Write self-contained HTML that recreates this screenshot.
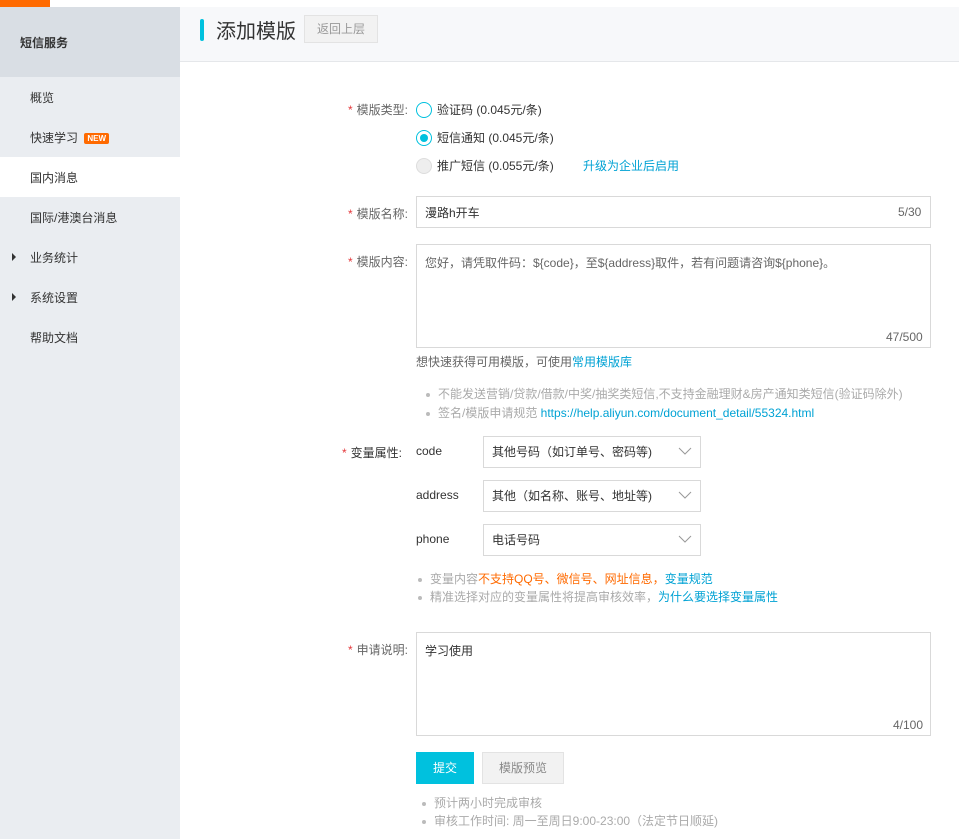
<!DOCTYPE html>
<html><head><meta charset="utf-8"><style>
*{margin:0;padding:0;box-sizing:border-box}
body{width:959px;height:839px;position:relative;overflow:hidden;background:#fff;font-family:"Liberation Sans","Noto Sans CJK SC",sans-serif;font-size:12px;color:#333}
.a{position:absolute;white-space:nowrap}
.side{position:absolute;left:0;top:7px;width:180px;height:832px;background:#eaedf1}
.lab{position:absolute;text-align:right;width:120px;color:#666}
.lab b{color:#e4393c;font-weight:normal;margin-right:4px}
.box{position:absolute;border:1px solid #d9d9d9;background:#fff}
.sel{position:absolute;left:483px;width:218px;height:32px;border:1px solid #d9d9d9;padding:0 8px;line-height:30px;color:#333}
.sel svg{position:absolute;right:8px;top:10px}
.grey{color:#999}
.blue{color:#00a2d4}
.dot{display:inline-block;width:4px;height:4px;background:#bbb;border-radius:50%;margin-right:8px;vertical-align:middle}
.radio{position:absolute;width:16px;height:16px;border-radius:50%;border:1px solid #00c1de;background:#fff}
</style></head><body>
<div class="a" style="left:0;top:0;width:959px;height:7px;background:#fff;box-shadow:0 1px 3px rgba(0,0,0,.08)"></div>
<div class="a" style="left:0;top:0;width:50px;height:7px;background:#ff6a00"></div>
<div class="side"></div>
<div class="a" style="left:0;top:7px;width:180px;height:70px;background:#d9dee4"></div>
<div class="a" style="left:20px;top:34px;font-weight:bold;color:#333">短信服务</div>
<div class="a" style="left:30px;top:89px">概览</div>
<div class="a" style="left:30px;top:129px">快速学习 <span style="display:inline-block;background:#ff6a00;color:#fff;font-size:8px;font-weight:bold;padding:1px 3px;border-radius:2px;margin-left:3px;vertical-align:1px">NEW</span></div>
<div class="a" style="left:0;top:157px;width:180px;height:40px;background:#fff"></div>
<div class="a" style="left:30px;top:169px">国内消息</div>
<div class="a" style="left:30px;top:209px">国际/港澳台消息</div>
<div class="a" style="left:12px;top:253px;width:0;height:0;border-left:4px solid #333;border-top:4px solid transparent;border-bottom:4px solid transparent"></div>
<div class="a" style="left:30px;top:249px">业务统计</div>
<div class="a" style="left:12px;top:293px;width:0;height:0;border-left:4px solid #333;border-top:4px solid transparent;border-bottom:4px solid transparent"></div>
<div class="a" style="left:30px;top:289px">系统设置</div>
<div class="a" style="left:30px;top:329px">帮助文档</div>

<div class="a" style="left:180px;top:7px;width:779px;height:55px;background:#f7f8fa;border-bottom:1px solid #e5e7ea"></div>
<div class="a" style="left:200px;top:19px;width:4px;height:22px;background:#00c1de;border-radius:2px"></div>
<div class="a" style="left:216px;top:15px;font-size:20px;color:#333">添加模版</div>
<div class="a" style="left:304px;top:15px;width:74px;height:28px;border:1px solid #e3e3e3;background:#f2f2f2;color:#999;text-align:center;line-height:26px">返回上层</div>

<div class="lab" style="left:288px;top:101px"><b>*</b>模版类型:</div>
<div class="radio" style="left:416px;top:102px"></div>
<div class="a" style="left:437px;top:101px;color:#333">验证码 (0.045元/条)</div>
<div class="radio" style="left:416px;top:130px"><div style="position:absolute;left:3px;top:3px;width:8px;height:8px;border-radius:50%;background:#00c1de"></div></div>
<div class="a" style="left:437px;top:129px">短信通知 (0.045元/条)</div>
<div class="radio" style="left:416px;top:158px;border-color:#ddd;background:#eee"></div>
<div class="a" style="left:437px;top:157px">推广短信 (0.055元/条)</div>
<div class="a blue" style="left:583px;top:157px;color:#00a2d4">升级为企业后启用</div>

<div class="lab" style="left:288px;top:205px"><b>*</b>模版名称:</div>
<div class="box" style="left:416px;top:196px;width:515px;height:32px"></div>
<div class="a" style="left:425px;top:204px">漫路h开车</div>
<div class="a" style="left:898px;top:205px;color:#666">5/30</div>

<div class="lab" style="left:288px;top:253px"><b>*</b>模版内容:</div>
<div class="box" style="left:416px;top:244px;width:515px;height:104px"></div>
<div class="a" style="left:425px;top:254px;color:#666">您好，请凭取件码：${code}，至${address}取件，若有问题请咨询${phone}。</div>
<div class="a" style="left:886px;top:330px;color:#666">47/500</div>
<div class="a" style="left:416px;top:353px;color:#666">想快速获得可用模版，可使用<span class="blue">常用模版库</span></div>
<div class="a grey" style="left:426px;top:385px;color:#aaa"><span class="dot"></span>不能发送营销/贷款/借款/中奖/抽奖类短信,不支持金融理财&amp;房产通知类短信(验证码除外)</div>
<div class="a grey" style="left:426px;top:404px;color:#aaa"><span class="dot"></span>签名/模版申请规范 <span class="blue">https://help.aliyun.com/document_detail/55324.html</span></div>

<div class="lab" style="left:282px;top:444px;color:#333"><b>*</b>变量属性:</div>
<div class="a" style="left:416px;top:444px">code</div>
<div class="sel" style="top:436px">其他号码（如订单号、密码等)<svg width="14" height="8"><path d="M1 1L7 7L13 1" stroke="#999" fill="none"/></svg></div>
<div class="a" style="left:416px;top:488px">address</div>
<div class="sel" style="top:480px">其他（如名称、账号、地址等)<svg width="14" height="8"><path d="M1 1L7 7L13 1" stroke="#999" fill="none"/></svg></div>
<div class="a" style="left:416px;top:532px">phone</div>
<div class="sel" style="top:524px">电话号码<svg width="14" height="8"><path d="M1 1L7 7L13 1" stroke="#999" fill="none"/></svg></div>
<div class="a" style="left:418px;top:570px;color:#aaa"><span class="dot"></span>变量内容<span style="color:#ff6a00">不支持QQ号、微信号、网址信息，</span><span class="blue">变量规范</span></div>
<div class="a" style="left:418px;top:588px;color:#aaa"><span class="dot"></span>精准选择对应的变量属性将提高审核效率，<span class="blue">为什么要选择变量属性</span></div>

<div class="lab" style="left:288px;top:641px"><b>*</b>申请说明:</div>
<div class="box" style="left:416px;top:632px;width:515px;height:104px"></div>
<div class="a" style="left:425px;top:642px">学习使用</div>
<div class="a" style="left:893px;top:718px;color:#666">4/100</div>

<div class="a" style="left:416px;top:752px;width:58px;height:32px;background:#00c1de;color:#fff;text-align:center;line-height:32px">提交</div>
<div class="a" style="left:482px;top:752px;width:82px;height:32px;background:#f2f2f2;border:1px solid #e3e3e3;color:#888;text-align:center;line-height:30px">模版预览</div>
<div class="a" style="left:422px;top:794px;color:#aaa"><span class="dot"></span>预计两小时完成审核</div>
<div class="a" style="left:422px;top:812px;color:#aaa"><span class="dot"></span>审核工作时间: 周一至周日9:00-23:00（法定节日顺延)</div>
</body></html>
